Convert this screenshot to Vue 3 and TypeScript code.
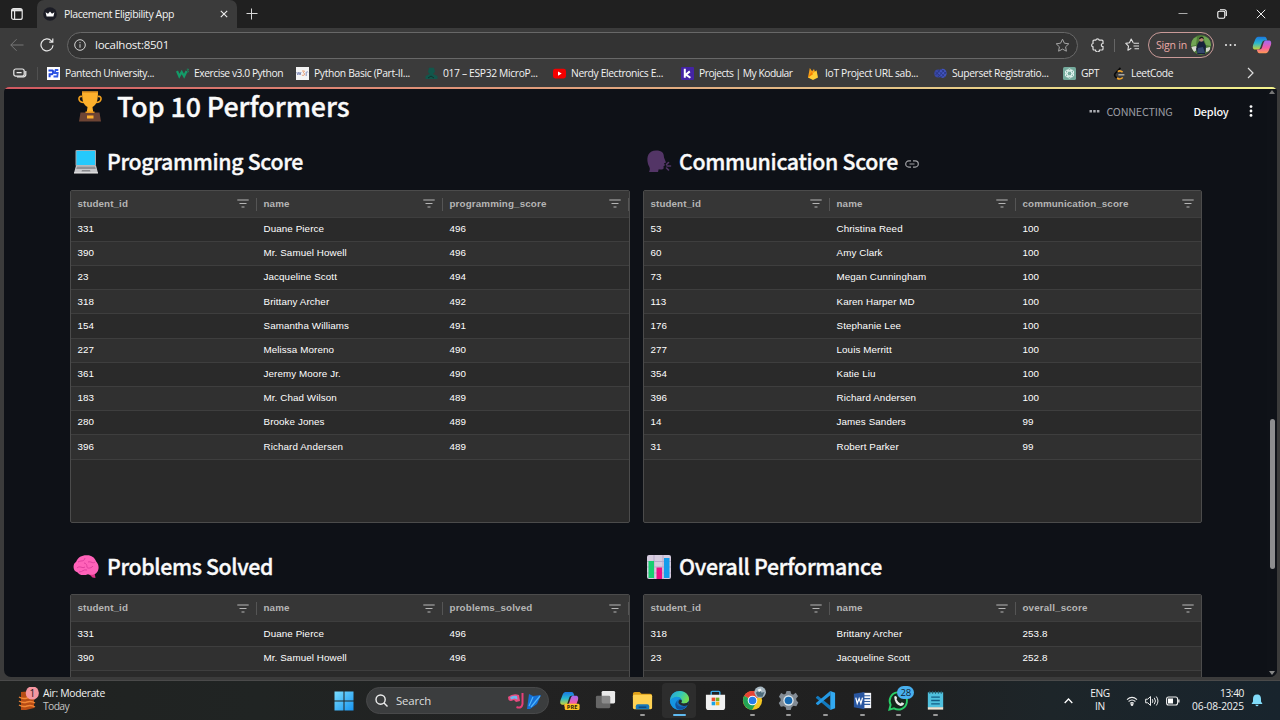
<script setup lang="ts">
import type { Directive } from 'vue'

interface Bookmark { id: string; label: string; slot: number; text: number }
interface Board { id: string; title: string; titleWidth: number; metric: string; metricWidth: number; linked?: boolean; rows: string[][] }

/* Spreads or tightens the letters of a label so that it takes the given width. */
const vFit: Directive<HTMLElement, number> = {
  mounted(el, binding) {
    const range = document.createRange()
    range.selectNodeContents(el)
    const natural = range.getBoundingClientRect().width
    const count = (el.textContent || '').trim().length
    if (count > 1) el.style.letterSpacing = `${((binding.value - natural) / count).toFixed(3)}px`
  },
}

const bookmarks: Bookmark[] = [
  { id: 'pantech', label: 'Pantech University...', slot: 129, text: 89 },
  { id: 'w3', label: 'Exercise v3.0 Python', slot: 120, text: 89 },
  { id: 'w3r', label: 'Python Basic (Part-II...', slot: 129, text: 96 },
  { id: 'esp', label: '017 – ESP32 MicroP...', slot: 128, text: 94.5 },
  { id: 'yt', label: 'Nerdy Electronics E...', slot: 128, text: 92 },
  { id: 'kod', label: 'Projects | My Kodular', slot: 126, text: 93.5 },
  { id: 'fire', label: 'IoT Project URL sab...', slot: 127, text: 93 },
  { id: 'sup', label: 'Superset Registratio...', slot: 129, text: 96.5 },
  { id: 'gpt', label: 'GPT', slot: 50, text: 18 },
  { id: 'leet', label: 'LeetCode', slot: 61, text: 42 },
]

const boards: Board[] = [
  {
    id: 'laptop', title: 'Programming Score', titleWidth: 196, metric: 'programming_score', metricWidth: 97,
    rows: [
      ['331', 'Duane Pierce', '496'], ['390', 'Mr. Samuel Howell', '496'], ['23', 'Jacqueline Scott', '494'],
      ['318', 'Brittany Archer', '492'], ['154', 'Samantha Williams', '491'], ['227', 'Melissa Moreno', '490'],
      ['361', 'Jeremy Moore Jr.', '490'], ['183', 'Mr. Chad Wilson', '489'], ['280', 'Brooke Jones', '489'],
      ['396', 'Richard Andersen', '489'],
    ],
  },
  {
    id: 'speak', title: 'Communication Score', titleWidth: 219, metric: 'communication_score', metricWidth: 106, linked: true,
    rows: [
      ['53', 'Christina Reed', '100'], ['60', 'Amy Clark', '100'], ['73', 'Megan Cunningham', '100'],
      ['113', 'Karen Harper MD', '100'], ['176', 'Stephanie Lee', '100'], ['277', 'Louis Merritt', '100'],
      ['354', 'Katie Liu', '100'], ['396', 'Richard Andersen', '100'], ['14', 'James Sanders', '99'],
      ['31', 'Robert Parker', '99'],
    ],
  },
  {
    id: 'brain', title: 'Problems Solved', titleWidth: 166, metric: 'problems_solved', metricWidth: 83,
    rows: [['331', 'Duane Pierce', '496'], ['390', 'Mr. Samuel Howell', '496'], ['', '', '']],
  },
  {
    id: 'chart', title: 'Overall Performance', titleWidth: 203, metric: 'overall_score', metricWidth: 65,
    rows: [['318', 'Brittany Archer', '253.8'], ['23', 'Jacqueline Scott', '252.8'], ['', '', '']],
  },
]

const apps = ['copilot', 'tasks', 'folder', 'edge', 'store', 'chrome', 'settings', 'code', 'word', 'whatsapp', 'notepad']
const running = ['folder', 'chrome', 'settings', 'code', 'word', 'whatsapp', 'notepad']
</script>

<template>
  <div class="screen">
    <header class="titlebar">
      <div class="workspaces">
        <svg width="14" height="14" viewBox="0 0 14 14" fill="none" stroke="#e6e6e6" stroke-width="1.2">
          <rect x="1.6" y="1.6" width="10.6" height="10.8" rx="2" /><path d="M2 3.2h10" stroke-width="2.2" /><path d="M4.6 4v8" />
        </svg>
      </div>
      <div class="tab">
        <svg width="14" height="14" viewBox="0 0 14 14"><circle cx="7" cy="7" r="6.8" fill="#1b1c25" /><path d="M2.600 5.300l2.400 1.500L7 4.500l2 2.300 2.400-1.500-1 4.100H3.600z" fill="#fff" /></svg>
        <span v-fit="110" class="tab-title">Placement Eligibility App</span>
        <svg class="tab-close" width="8" height="8" viewBox="0 0 8 8"><path d="M.8.8l6.4 6.4M7.2.8L.8 7.2" stroke="#f0f0f0" stroke-width="1.1" /></svg>
      </div>
      <svg class="new-tab" width="12" height="12" viewBox="0 0 12 12"><path d="M5.500 .5v11M.5 5.500h11" stroke="#d8d8d8" stroke-width="1" /></svg>
      <div class="window-buttons">
        <svg width="10" height="10" viewBox="0 0 10 10"><path d="M.5 4.5h9" stroke="#aaa" stroke-width="1" /></svg>
        <svg width="10" height="10" viewBox="0 0 10 10" fill="none" stroke="#fff" stroke-width="1.1"><rect x=".8" y="2.2" width="7" height="7" rx="1.4" /><path d="M3 .8h4.400a1.900 1.900 0 0 1 1.900 1.900V7" /></svg>
        <svg width="10" height="10" viewBox="0 0 10 10"><path d="M.8.8l8.400 8.400M9.200.8L.8 9.200" stroke="#eee" stroke-width="1" /></svg>
      </div>
    </header>

    <div class="toolbar">
      <svg class="back" width="14" height="14" viewBox="0 0 14 14" fill="none" stroke="#777" stroke-width="1"><path d="M13.500 7H.8M6.600 1.200L.8 7l5.800 5.800" /></svg>
      <svg class="reload" width="14" height="14" viewBox="0 0 14 14" fill="none" stroke="#e8e8e8" stroke-width="1.200"><path d="M13 7.300A6 6 0 1 1 11.400 2.800L12.600 4M12.800.6V4.200H9.200" /></svg>
      <div class="address">
        <svg width="12" height="12" viewBox="0 0 12 12" fill="none" stroke="#d5d5d5" stroke-width="1"><circle cx="6" cy="6" r="5.300" /><path d="M6 5.200v3.500M6 3.100v1.100" /></svg>
        <span v-fit="74" class="url">localhost:8501</span>
        <svg class="star" width="15" height="15" viewBox="0 0 15 15" fill="none" stroke="#a5a5a5" stroke-width="1"><path d="M7.500 1.200l1.900 4 4.400.6-3.200 3 .8 4.400-3.900-2.100-3.900 2.100.8-4.400-3.200-3 4.400-.6z" stroke-linejoin="round" /></svg>
      </div>
      <svg class="ext" width="14" height="14" viewBox="0 0 14 14" fill="none" stroke="#e0e0e0" stroke-width="1.200"><path d="M2 3.200a1 1 0 0 1 1-1h1.700a1.900 1.900 0 0 1 3.600 0H11a1 1 0 0 1 1 1v2.300c-2.300 0-2.300 3.200 0 3.200V11a1 1 0 0 1-1 1H8.500a2 2 0 0 1-4 0H3a1 1 0 0 1-1-1V8.800C.2 8.500.2 5.800 2 5.500z" /></svg>
      <i class="tool-sep"></i>
      <svg class="favs" width="15" height="14" viewBox="0 0 15 14" fill="none" stroke="#e0e0e0" stroke-width="1.100"><path d="M8.200 4.800L6.200 1 4.500 4.800.8 5.400l2.700 2.800-.6 4 3.400-1.900M8.500 5.300H14M8.500 8H14M9.500 10.700H14" stroke-linejoin="round" /></svg>
      <div class="signin">
        <span v-fit="31">Sign in</span>
        <svg width="20" height="20" viewBox="0 0 20 20"><defs><clipPath id="avatar"><circle cx="10" cy="10" r="10" /></clipPath></defs><g clip-path="url(#avatar)"><path fill="#4f7c38" d="M0 0h20v20H0z" /><path fill="#70a453" d="M12 1l8 3v7l-5-1zM0 4l6-2-1 8-5 1z" /><path fill="#d5d8cf" d="M0 12l5-1 2 3-4 3zM15 13l4-1v4l-4 1z" /><path fill="#17213a" d="M6.500 9l2-3h4l2.500 5-1 8H6.500L5 14z" /><path fill="#34476c" d="M7 13l5-1 2 6H6z" /><circle cx="10.300" cy="4.600" r="2.200" fill="#b48770" /><path fill="#151517" d="M8 4.500c0-3.500 4.800-3.500 4.800-.2l-2-1.300z" /></g></svg>
      </div>
      <svg class="dots" width="13" height="4" viewBox="0 0 13 4" fill="#eee"><circle cx="2" cy="2" r="1" /><circle cx="6.500" cy="2" r="1" /><circle cx="11" cy="2" r="1" /></svg>
      <svg class="pilot" width="20" height="20" viewBox="0 0 24 24">
        <defs>
          <linearGradient id="cpA" x1="0" y1="0" x2="0" y2="1"><stop offset="0" stop-color="#1a77e0" /><stop offset=".5" stop-color="#29b6ce" /><stop offset="1" stop-color="#c8d438" /></linearGradient>
          <linearGradient id="cpB" x1="0" y1="0" x2="0" y2="1"><stop offset="0" stop-color="#a06af4" /><stop offset=".55" stop-color="#f15ba8" /><stop offset="1" stop-color="#ff9b50" /></linearGradient>
        </defs>
        <path d="M8.500 2H15c2 0 2.500 2 3.300 4.500H15c-2 0-2.800 1.500-3.500 4L10 15c-.8 2-1.500 2.500-3.500 2.500H4C1 17.500.5 15 1.300 12L4 5c1-2.300 2.500-3 4.500-3z" fill="url(#cpA)" />
        <path d="M15.500 22H9c-2 0-2.500-2-3.300-4.500H9c2 0 2.800-1.500 3.500-4L14 9c.8-2 1.500-2.500 3.500-2.500H20c3 0 3.500 2.500 2.700 5.500L20 19c-1 2.300-2.500 3-4.500 3z" fill="url(#cpB)" />
      </svg>
    </div>

    <nav class="bookmarks">
      <svg class="bm-first" width="14" height="10" viewBox="0 0 14 10" fill="none" stroke="#eee" stroke-width="1.200"><rect x=".8" y="1" width="10.400" height="7.200" rx="2" /><path d="M3.600 4.600h5M12.800 3v3.400a2.500 2.500 0 0 1-2.400 2.600H4" /></svg>
      <i class="bm-sep"></i>
      <div v-for="b in bookmarks" :key="b.id" class="bookmark" :style="{ width: b.slot + 'px' }">
        <svg width="13" height="13" viewBox="0 0 13 13">
          <template v-if="b.id === 'pantech'"><path fill="#fff" d="M0 0h13v13H0z" /><path d="M1.500 3.500h4q1.700 2-.5 3.800H2.600v3" fill="none" stroke="#2348dd" stroke-width="2" /><path d="M11.300 3H8.600L7.700 6h3l-.4 3.500H6.500" fill="none" stroke="#3159e6" stroke-width="1.800" /></template>
          <template v-else-if="b.id === 'w3'"><path d="M1 4l2.300 5.200L5.700 5l2.400 4.200L10.600 4" fill="none" stroke="#139b68" stroke-width="2.300" /><path d="M10.800 2.200h1.700l-.8 1.600.8.6-.8 1.200" fill="none" stroke="#139b68" stroke-width=".8" /></template>
          <template v-else-if="b.id === 'w3r'"><path fill="#f4f4f4" d="M0 0h13v13H0z" /><path d="M.8 5l1 3 1.100-3 1.100 3 1-3" fill="none" stroke="#7986b4" stroke-width=".9" /><path d="M6 4h2.500L7.300 5.800q2 .3 1 2.200-1.300 1-2.500 0" fill="none" stroke="#e79b70" stroke-width=".9" /><path d="M10.200 9V5.200q1.600-.8 2 .2" fill="none" stroke="#7986b4" stroke-width=".9" /></template>
          <template v-else-if="b.id === 'esp'"><path d="M4 .8h5l1 4-2 2.300 4.500 2V12H.5V9l4.300-2L3 5z" fill="#12564b" /><path d="M3 11l3-2 3 2" stroke="#0d332f" fill="none" /></template>
          <template v-else-if="b.id === 'yt'"><rect y="1.800" width="13" height="9.600" rx="2.400" fill="#f40000" /><path fill="#fff" d="M5 4.400v4.400l3.700-2.200z" /></template>
          <template v-else-if="b.id === 'kod'"><rect width="13" height="13" rx="1" fill="#4424a5" /><path d="M3.800 1.800v9M8.800 4.400L4.800 7.600l4.600 3.200" fill="none" stroke="#fff" stroke-width="2" /></template>
          <template v-else-if="b.id === 'fire'"><path fill="#f6a01a" d="M1 10.500L2.800 1l2.300 3.300L7 2l3 8.500z" /><path fill="#ffce35" d="M1 10.500l8.500-7.200L11 10.500 6 13z" /><path fill="#f57c00" d="M1 10.500L4.500 5 6 7.200z" /></template>
          <template v-else-if="b.id === 'sup'"><ellipse cx="4.200" cy="6.500" rx="3.900" ry="4.100" fill="#3947a5" /><ellipse cx="8.600" cy="6.300" rx="4" ry="4.600" fill="#4153bd" /><path d="M1.500 5l6 5M3.500 3l7 6.500M7 2.200l5 4.500M1.500 8l5-5.500M4 10l6-7M7 10.500l5-5.500" stroke="#27357c" stroke-width=".8" /></template>
          <template v-else-if="b.id === 'gpt'"><rect width="13" height="13" rx="1.600" fill="#74aa9c" /><g fill="none" stroke="#f4fffc" stroke-width=".8"><ellipse cx="6.500" cy="6.500" rx="2.300" ry="4.700" /><ellipse cx="6.500" cy="6.500" rx="2.300" ry="4.700" transform="rotate(60 6.500 6.500)" /><ellipse cx="6.500" cy="6.500" rx="2.300" ry="4.700" transform="rotate(120 6.500 6.500)" /></g></template>
          <template v-else><path d="M7.500.8L2.600 6q-2 2 0 3.800l1.500 1.500" fill="none" stroke="#0b0b0b" stroke-width="1.700" /><path d="M4.800 4.600Q7 2.800 9.600 5.200M4 11q3 2.200 5.800-.5" fill="none" stroke="#f2a42a" stroke-width="1.600" /><path d="M5.400 7.800h6" stroke="#bbb" stroke-width="1.300" /></template>
        </svg>
        <span v-fit="b.text">{{ b.label }}</span>
      </div>
      <svg class="bm-more" width="7" height="12" viewBox="0 0 7 12"><path d="M1 1l5 5-5 5" fill="none" stroke="#ddd" stroke-width="1.200" /></svg>
    </nav>

    <div class="viewport">
      <div class="page">
        <div class="progress"></div>
        <div class="status">
          <svg width="11" height="3" viewBox="0 0 11 3" fill="#a9abb0"><path d="M.5 0h2.500v2.500H.5zM4.200 0h2.500v2.500H4.200zM7.900 0h2.500v2.500H7.900z" /></svg>
          <span v-fit="66" class="connecting">CONNECTING</span>
          <span v-fit="35" class="deploy">Deploy</span>
          <svg class="kebab" width="4" height="12" viewBox="0 0 4 12" fill="#fafafa"><circle cx="2" cy="1.600" r="1.400" /><circle cx="2" cy="6" r="1.400" /><circle cx="2" cy="10.400" r="1.400" /></svg>
        </div>
        <div class="scrollbar"><i class="up"></i><i class="thumb"></i><i class="down"></i></div>

        <main>
          <h1>
            <svg width="26" height="31" viewBox="0 0 26 31">
              <path d="M5 5.500C.5 4.500.8 11.500 7 11.500M21 5.500c4.500-1 4.200 6-2 6" fill="none" stroke="#f5a21d" stroke-width="1.600" /><path d="M5 .5h16c0 8-1 13.500-5.500 15.500l.7 5h-6.400l.7-5C6 14 5 8.500 5 .5z" fill="#fdb02c" /><path d="M5 .5h16v1.500H5z" fill="#e7961f" /><path d="M3.500 21.500h19l1.500 9H2z" fill="#6d4434" /><path d="M8.500 20.500h9v1.500h-9z" fill="#e7961f" /><path d="M10 24.500h6.500V27.500H10z" fill="#ffb02e" />
            </svg>
            <span v-fit="232.500">Top 10 Performers</span>
          </h1>
          <div class="boards">
            <section v-for="b in boards" :key="b.id" class="board">
              <h2>
                <svg width="26" height="26" viewBox="0 0 26 26">
                  <template v-if="b.id === 'laptop'"><rect x="2.500" y="1" width="20.500" height="16" rx="1" fill="#a6a9ad" /><path d="M3.500 2h18.500v14H3.500z" fill="#26c9fc" /><path d="M3 16.500h20L25 24H1z" fill="#c8c8cb" /><path d="M4 17.500h18l.8 2.500H3.200z" fill="#909196" /><path d="M9 21h8l.5 1.500h-9z" fill="#88898d" /><path d="M1 23.500h24v1H1z" fill="#eee" /></template>
                  <template v-else-if="b.id === 'speak'"><path d="M3 23c2-4 0-5-1-8C0 7 3 1.500 10 1.500c6 0 8 2.500 8 7l2 5-2 .8 1 2-1.500 1 .2 2c-.5 1.500-3 1.400-5 1l-.7 2.700z" fill="#533566" /><path d="M20.500 15.500l2-2M21 17h3.500M20.500 19l2 2" stroke="#533566" stroke-width="1.600" stroke-linecap="round" /></template>
                  <template v-else-if="b.id === 'brain'"><path d="M17 19h4.500l1 5-3-.5-3-3z" fill="#dc3287" /><path d="M2 17C-.5 14 .5 9 3 8 5 3 9 1 14 1.200c4-.2 8 2.500 9 6 3 3 3.500 8 1 11-2 3-7 3-9 2-4 1.500-9 1-10-1.500z" fill="#ff62b9" /><path d="M5 8c4-2 6 0 7-4M15 8c3-1 5 2 7 0M4 14c3-3 5 1 8-1M11 9c2 0 3 2 3 4s5 1 6-1M6 18c4 0 4-3 8-2" fill="none" stroke="#e0409f" stroke-width="1" /></template>
                  <template v-else><rect x="1" y="1" width="24" height="24" rx="2" fill="#d6ccdf" /><path d="M8 1v24M17 1v24M1 7.500h24M1 13h24M1 19h24" stroke="#b7a9ca" stroke-width="1" /><path d="M2.500 7H8v17H2.500z" fill="#18cf70" /><path d="M10.500 13.500H16V25h-5.500z" fill="#ee1084" /><path d="M18 4h5.500v20H18z" fill="#159dec" /></template>
                </svg>
                <span v-fit="b.titleWidth">{{ b.title }}</span>
                <svg v-if="b.linked" class="anchor" width="14" height="8" viewBox="0 0 14 8" fill="none" stroke="#a0a1a5" stroke-width="1.200"><path d="M6 .9H3.800a3.100 3.100 0 0 0 0 6.200H6M8 .9h2.200a3.100 3.100 0 0 1 0 6.200H8M4.500 4h5" /></svg>
              </h2>
              <div class="grid">
                <div class="row head">
                  <div class="cell"><span v-fit="50.500">student_id</span><svg class="filter" width="12" height="9" viewBox="0 0 12 9"><path d="M.3 1h11.400M2.500 4.500h7M4.500 8h3" stroke="#b5b5b5" stroke-width="1.200" /></svg></div>
                  <div class="cell"><span v-fit="26">name</span><svg class="filter" width="12" height="9" viewBox="0 0 12 9"><path d="M.3 1h11.400M2.500 4.500h7M4.500 8h3" stroke="#b5b5b5" stroke-width="1.200" /></svg></div>
                  <div class="cell"><span v-fit="b.metricWidth">{{ b.metric }}</span><svg class="filter" width="12" height="9" viewBox="0 0 12 9"><path d="M.3 1h11.400M2.500 4.500h7M4.500 8h3" stroke="#b5b5b5" stroke-width="1.200" /></svg></div>
                </div>
                <div v-for="(r, i) in b.rows" :key="i" class="row data">
                  <div v-for="(c, j) in r" :key="j" class="cell">{{ c }}</div>
                </div>
              </div>
            </section>
          </div>
        </main>
      </div>
    </div>

    <footer class="taskbar">
      <div class="weather">
        <svg width="22" height="24" viewBox="0 0 22 24"><path d="M3 5l11-1 2 3v14l-8 2H3z" fill="#b74c15" /><path d="M1 10q4 2.500 8 1t8 1M1 14q4 2.500 8 1t8 1M1 18q4 2.500 8 1t8 1" fill="none" stroke="#f38736" stroke-width="1.400" /><circle cx="14.300" cy="6" r="6.600" fill="#f596a0" /><text x="14.300" y="9.600" text-anchor="middle" font-size="10" font-family="Open Sans, sans-serif" fill="#24171a">1</text></svg>
        <div class="weather-text"><span v-fit="62">Air: Moderate</span><span v-fit="26" class="dim">Today</span></div>
      </div>
      <svg class="start" width="20" height="20" viewBox="0 0 20 20"><defs><linearGradient id="win" x1="0" y1="0" x2="1" y2="1"><stop offset="0" stop-color="#79ddff" /><stop offset="1" stop-color="#1794ef" /></linearGradient></defs><path d="M.5.5h9v9h-9zM10.500.5h9v9h-9zM.5 10.500h9v9h-9zM10.500 10.500h9v9h-9z" fill="url(#win)" /></svg>
      <div class="search">
        <svg width="13" height="13" viewBox="0 0 13 13" fill="none" stroke="#eee" stroke-width="1.400"><circle cx="5.600" cy="5.600" r="4.600" /><path d="M9 9l3.500 3.500" /></svg>
        <span v-fit="35">Search</span>
        <svg class="snorkel" width="36" height="18" viewBox="0 0 36 18"><path d="M1 5q5-4 11-2l1 6-4 1-2-2-3 1Q1 9 1 5z" fill="#e84c80" /><path d="M3 5q4-2 7-1l.5 3.500-3-1L4 7.500z" fill="#70b5ed" /><path d="M15.500 1v11q-1 5-6 3" fill="none" stroke="#e63f78" stroke-width="2" /><path d="M20 17l2-15 4 2 8-1-4 9-7 5z" fill="#1470d6" /><path d="M22 14L26 5M24 15l9-11" stroke="#50b5fb" fill="none" stroke-width="1.200" /></svg>
      </div>
      <div class="apps">
        <div v-for="a in apps" :key="a" class="app" :class="{ active: a === 'edge' }">
          <svg width="24" height="24" viewBox="0 0 24 24">
            <template v-if="a === 'copilot'"><g transform="translate(1.500 1.500) scale(.85)"><path d="M8.500 2H15c2 0 2.500 2 3.300 4.500H15c-2 0-2.800 1.500-3.500 4L10 15c-.8 2-1.500 2.500-3.500 2.500H4C1 17.500.5 15 1.300 12L4 5c1-2.300 2.500-3 4.500-3z" fill="url(#cpA)" /><path d="M15.500 22H9c-2 0-2.500-2-3.300-4.500H9c2 0 2.800-1.500 3.500-4L14 9c.8-2 1.500-2.500 3.500-2.500H20c3 0 3.500 2.500 2.700 5.500L20 19c-1 2.300-2.500 3-4.500 3z" fill="url(#cpB)" /></g><rect x="7" y="15.500" width="15.500" height="6.500" rx="1.500" fill="#ffc426" /><text x="14.700" y="21" text-anchor="middle" font-size="6" font-weight="700" font-family="Open Sans, sans-serif" fill="#2b210b">PRE</text></template>
            <template v-else-if="a === 'tasks'"><rect x="8" y="2" width="14" height="13" rx="1.500" fill="#eaeaea" /><rect x="2" y="7" width="15" height="13" rx="1.500" fill="#757575" opacity=".82" /></template>
            <template v-else-if="a === 'folder'"><path d="M2 5q0-2 2-2h5l2 2h9q2 0 2 2v4H2z" fill="#dfa019" /><rect x="2" y="6" width="20" height="15" rx="1.500" fill="#ffd253" /><path d="M5 21v-3q0-2 2-2h10q2 0 2 2v3z" fill="#1777b8" /><path d="M8 19h8" stroke="#0d477b" stroke-width="1.500" /></template>
            <template v-else-if="a === 'edge'"><defs><linearGradient id="eg" x1="0" y1="0" x2="1" y2=".4"><stop offset="0" stop-color="#269fde" /><stop offset=".6" stop-color="#36c9b5" /><stop offset="1" stop-color="#72dc55" /></linearGradient></defs><circle cx="12" cy="12" r="10" fill="#1570bd" /><path d="M2 12C3 5 7 2 12.500 2 18 2 22 6 22 10.500c0 4-4 5.500-8 4.500-1-.5.500-1.500.5-3C14 8 8 7 2 12z" fill="url(#eg)" /><path d="M2 12c4-5 10-5 12-1-4-1-6 2-5 5 1 4 6 5 11 2-3 4-9 5-13 2.500-3-1.500-5-5-5-8.500z" fill="#1594e2" /><path d="M9.500 12.500c-2 4 3 8 10.500 5-4 5-11 5.500-12 1-1-3 0-5 1.500-6z" fill="#12529f" /><path d="M14.500 12q0 2-.8 2.700 5 1.600 8.300-2l-1 4q-6 2.500-9.500-1.200-1.500-2.500 1-4.500z" fill="#242b2e" /></template>
            <template v-else-if="a === 'store'"><path d="M7.500 7V3.500q0-1 1-1h7q1 0 1 1V7" fill="none" stroke="#38a9e5" stroke-width="1.500" /><path d="M2 6h20v13q0 3-3 3H5q-3 0-3-3z" fill="#f1f1f1" /><path d="M8 9h3.700v3.700H8z" fill="#e94b29" /><path d="M12.300 9H16v3.700h-3.700z" fill="#78ad20" /><path d="M8 13.300h3.700V17H8z" fill="#17a4e8" /><path d="M12.300 13.300H16V17h-3.700z" fill="#f6b219" /></template>
            <template v-else-if="a === 'chrome'"><circle cx="12" cy="12" r="10" fill="#f4c622" /><path d="M12 12L3.300 7Q6 2 12 2q6 0 8.700 5z" fill="#e54335" /><path d="M12 12l-8.700-5C0 13 4 21 11.500 22L16 14z" fill="#23a455" /><circle cx="12" cy="12" r="5" fill="#fff" /><circle cx="12" cy="12" r="4" fill="#287ce8" /><circle cx="20" cy="3.500" r="6" fill="#a7b7c1" /><path d="M15.500 4l4-3 2 3 3-1-2 5h-5z" fill="#4b6a7a" /><path d="M17.500 .5l3-1 1 2-3 2z" fill="#eef5f6" /></template>
            <template v-else-if="a === 'settings'"><path d="M10 2h4l.8 3 2 .9L19.500 4l2.500 3.500-2 2.300.2 2 2 2.200-2 4-3-.5-2 1.500-.9 3h-4.500L9 19l-2-1-3 .6-2.200-4 2-2.300v-2L2 8l2.300-3.800 3 1.500L9 5z" fill="#838c95" /><circle cx="12" cy="12" r="5.400" fill="#dce6ec" /><circle cx="12" cy="12" r="4" fill="#176ab1" /></template>
            <template v-else-if="a === 'code'"><path d="M2 8.500L4 7l13 10.500V22L2 9.500z" fill="#1279bd" /><path d="M2 15.500L4 17 17 6.500V2L2 14.500z" fill="#2499e4" /><path d="M17 2l5 2v16l-5 2z" fill="#32aaf2" /></template>
            <template v-else-if="a === 'word'"><path d="M12 4h9v16h-9z" fill="#f5f7fb" /><path d="M13 7h7M13 10h7M13 13h7M13 16h7" stroke="#315e9e" stroke-width="1.200" /><path d="M3 5l11-2v18L3 19z" fill="#2956a0" /><path d="M5 9l1.500 6L8.500 10l1.800 5L12 9" fill="none" stroke="#fff" stroke-width="1.300" /></template>
            <template v-else-if="a === 'whatsapp'"><path d="M2.500 21.500l1.300-5a9 9 0 1 1 3.500 3.700z" fill="#17251c" stroke="#29ce67" stroke-width="2" /><path d="M7.500 8q2-2 3 1l-.5 2q1.500 3 4 4l1.500-1.300 2.500 1.500q-1 3-4 2.500Q8 16 7.500 8z" fill="#fff" opacity=".9" /></template>
            <template v-else><path d="M4 3.500h16v16H4z" fill="#4fc0dd" /><path d="M4 19h16v2.500H4z" fill="#eee4d3" /><path d="M6 2v3M9 2v3M12 2v3M15 2v3M18 2v3" stroke="#225c6c" /><path d="M7.500 8.500h9M7.500 12h9M7.500 15.500h9" stroke="#135d85" stroke-width="1.400" /></template>
          </svg>
          <span v-if="a === 'whatsapp'" class="badge">28</span>
          <i v-if="a === 'edge' || running.includes(a)" class="mark"></i>
        </div>
      </div>
      <div class="tray">
        <svg class="caret" width="9" height="6" viewBox="0 0 9 6"><path d="M.7 5l3.800-4 3.800 4" fill="none" stroke="#fff" stroke-width="1.300" /></svg>
        <div class="lang"><span v-fit="19.500">ENG</span><span v-fit="10">IN</span></div>
        <svg class="wifi" width="12" height="12" viewBox="0 0 12 12" fill="none" stroke="#eee" stroke-width="1.100"><path d="M1 4.600q5-4.500 10 0M2.600 6.500q3.400-3 6.800 0M4.100 8.300q1.900-1.600 3.800 0" /><circle cx="6" cy="9.600" r=".9" fill="#fff" /></svg>
        <svg class="sound" width="14" height="12" viewBox="0 0 14 12" fill="none" stroke="#eee" stroke-width="1"><path d="M.7 4.200h2L5.500 1.500v9L2.700 7.800h-2zM7.300 4.200q1.300 1.800 0 3.600M9.300 2.800q2.300 3.200 0 6.400M11.300 1.500q3.300 4.500 0 9" /></svg>
        <svg class="battery" width="14" height="10" viewBox="0 0 14 10"><rect x=".6" y="1" width="11" height="8" rx="2" fill="none" stroke="#eee" stroke-width="1.100" /><rect x="2" y="2.500" width="5" height="5" fill="#fff" /><path d="M12.200 3.500h1.300v3h-1.300z" fill="#eee" /></svg>
        <div class="clock"><span v-fit="24">13:40</span><span v-fit="52">06-08-2025</span></div>
        <svg class="bell" width="12" height="13" viewBox="0 0 12 13"><path d="M6 .5C3 .5 2 2.500 2 5v2.500L.5 10h11L10 7.500V5C10 2.500 9 .5 6 .5zM4.200 10.800h3.600Q6 13.800 4.200 10.800z" fill="#82dcfa" /></svg>
      </div>
    </footer>
  </div>
</template>

<style>
html, body { margin: 0; overflow: hidden; background: #202020; }
</style>

<style scoped>
.screen { width: 1280px; height: 720px; overflow: hidden; display: flex; flex-direction: column; background: #3b3b3b; color: #f2f2f2; font: 10.5px/14px "Open Sans", "Noto Sans", sans-serif; box-sizing: border-box; }
.screen * { box-sizing: border-box; }
.screen svg { flex: none; display: block; }
.screen span { white-space: nowrap; }
.titlebar { height: 28px; flex: none; background: #202020; display: flex; align-items: center; }
.workspaces { width: 37px; height: 28px; padding: 7px 0 0 10px; }
.tab { width: 200px; height: 28px; background: #3b3b3b; border-radius: 7px 7px 0 0; display: flex; align-items: center; padding: 0 9px 0 6px; }
.tab-title { margin-left: 7px; margin-top: -1px; }
.tab-close { margin-left: auto; }
.new-tab { margin-left: 9px; }
.window-buttons { margin-left: auto; display: flex; gap: 29px; padding-right: 14px; }
.toolbar { height: 34px; flex: none; display: flex; align-items: center; }
.back { margin-left: 10px; }
.reload { margin-left: 16px; }
.address { width: 1011px; height: 27px; margin-left: 13px; border: 1px solid #686868; border-radius: 14px; background: #333; display: flex; align-items: center; padding: 0 7px 0 6px; }
.url { margin-left: 9px; font-size: 11.5px; }
.star { margin-left: auto; }
.ext { margin-left: 13px; }
.tool-sep { width: 1px; height: 13px; background: #666; margin-left: 9px; }
.favs { margin-left: 10px; }
.signin { width: 66px; height: 26px; border: 1px solid #c99a98; border-radius: 13px; margin-left: 8px; display: flex; align-items: center; gap: 4px; padding-left: 7px; color: #eba9a6; }
.dots { margin-left: 10px; }
.pilot { margin-left: 15px; }
.bookmarks { height: 25px; flex: none; display: flex; align-items: center; padding-bottom: 3px; font-size: 10.300px; }
.bm-first { margin-left: 13px; }
.bm-sep { width: 1px; height: 13px; background: #505050; margin: 0 9px 0 10px; }
.bookmark { flex: none; display: flex; align-items: center; gap: 5px; }
.bm-more { margin-left: 73px; }
.viewport { height: 594px; flex: none; padding: 0 3px 4px 4px; border-bottom: 1px solid #4a4a4a; }
.page { position: relative; height: 590px; overflow: hidden; background: #0e1117; border-radius: 5px 5px 7px 7px; }
.progress { height: 2px; background: linear-gradient(90deg, #d05860, #df8a75 28%, #e3bd86 65%, #f4f48e); }
.status { position: absolute; top: 14px; right: 24.500px; height: 20px; display: flex; align-items: center; font-family: "Noto Sans CJK SC", sans-serif; }
.connecting { margin-left: 7px; font-size: 10.800px; color: #9a9ca3; }
.deploy { margin-left: 21px; font-size: 10.900px; font-weight: 500; color: #fafafa; }
.kebab { margin-left: 20px; }
.scrollbar { position: absolute; right: 0; top: 2px; bottom: 0; width: 10px; background: #0f1218; }
.scrollbar i { position: absolute; left: 2px; }
.scrollbar .thumb { top: 330px; left: 3px; width: 5px; height: 150px; border-radius: 3px; background: #8d8d8f; }
.scrollbar .up { top: 1px; border: 3px solid transparent; border-top: 0; border-bottom: 4px solid #777; }
.scrollbar .down { bottom: 2px; border: 3px solid transparent; border-bottom: 0; border-top: 4px solid #888; }
main { padding: 0 0 0 66px; font-family: "Noto Sans CJK SC", sans-serif; color: #fafafa; }
h1, h2 { margin: 0; display: flex; align-items: center; font-weight: 500; -webkit-text-stroke: .35px #fafafa; }
h1 { height: 37px; padding: 0 0 0 7px; font-size: 26.800px; line-height: 36px; }
h1 span { margin: -4px 0 0 14px; }
h1 svg { margin-top: -2px; }
.boards { display: grid; grid-template-columns: 560px 559px; column-gap: 13px; row-gap: 30px; }
.board h2 { height: 63.500px; padding: 9px 0 0 3px; font-size: 21.300px; line-height: 30px; }
.board:nth-child(n + 3) h2 { height: 41.500px; padding-top: 0; padding-bottom: 13px; }
h2 span { margin: -2px 0 0 8px; }
.board:nth-child(even) h2 span { margin-left: 7px; }
h2 .anchor { margin: 4px 0 0 6.500px; }
.grid { height: 333.300px; border: 1px solid #4b4b4b; border-radius: 2px; background: #2a2a2a; font-family: "Liberation Sans", Arial, sans-serif; overflow: hidden; }
.row { display: grid; grid-template-columns: repeat(3, 186px); border-bottom: 1px solid #3e3e3e; }
.head { height: 27.200px; background: #363636; color: #b5b5b5; font-size: 9.800px; font-weight: 700; }
.data { height: 24.200px; font-size: 9.800px; letter-spacing: .1px; color: #fff; }
.data:nth-child(odd) { background: #303030; }
.cell { padding: 0 0 .600px 6.500px; display: flex; align-items: center; }
.head .cell { position: relative; padding-right: 8px; padding-bottom: 0; }
.head .cell::after { content: ""; position: absolute; right: 0; top: 7px; width: 1px; height: 13px; background: #555; }
.filter { margin-left: auto; }
.taskbar { height: 39px; flex: none; display: flex; align-items: center; background: linear-gradient(90deg, #202221 0, #202423 20%, #222222 40%, #202020 68%, #1d2529 82%, #18242d 100%); }
.weather { width: 334px; display: flex; align-items: center; padding-left: 18px; gap: 3px; font-size: 10.400px; }
.weather svg { margin-top: -4px; }
.weather-text, .lang, .clock { display: flex; flex-direction: column; line-height: 13px; }
.weather-text { line-height: 13.500px; margin-top: -1px; }
.dim { color: #c4c4c4; }
.search { width: 183px; height: 27px; margin-left: 12px; border-radius: 14px; border: 1px solid #48494a; background: #3b3d3e; display: flex; align-items: center; padding: 0 5px 0 8px; gap: 8px; font-size: 11.400px; color: #ddd; }
.snorkel { margin-left: auto; }
.apps { display: flex; margin-left: 2px; }
.app { position: relative; width: 36.600px; height: 35px; display: flex; align-items: center; justify-content: center; }
.active::before { content: ""; position: absolute; inset: 0 1px; background: #2d2d2d; border-radius: 4px; }
.app svg { position: relative; width: 23px; height: 23px; overflow: visible; }
.mark { position: absolute; bottom: 2px; left: calc(50% - 2.500px); width: 5px; height: 2px; border-radius: 1px; background: #999; }
.active .mark { width: 13px; left: calc(50% - 6.500px); background: #60baf0; }
.badge { position: absolute; top: 3px; left: 17px; width: 17px; height: 13px; border-radius: 7px; background: #48b0ee; color: #122231; font-size: 9.500px; line-height: 13px; text-align: center; }
.tray { margin-left: auto; display: flex; align-items: center; font-size: 10.200px; padding-right: 17px; }
.lang { width: 20px; margin-left: 17px; align-items: center; }
.wifi { margin-left: 16px; }
.sound { margin-left: 7px; }
.battery { margin-left: 7px; }
.clock { width: 53px; margin-left: 11px; align-items: flex-end; }
.lang, .clock { margin-top: -1px; }
.bell { margin-left: 7px; }
</style>
